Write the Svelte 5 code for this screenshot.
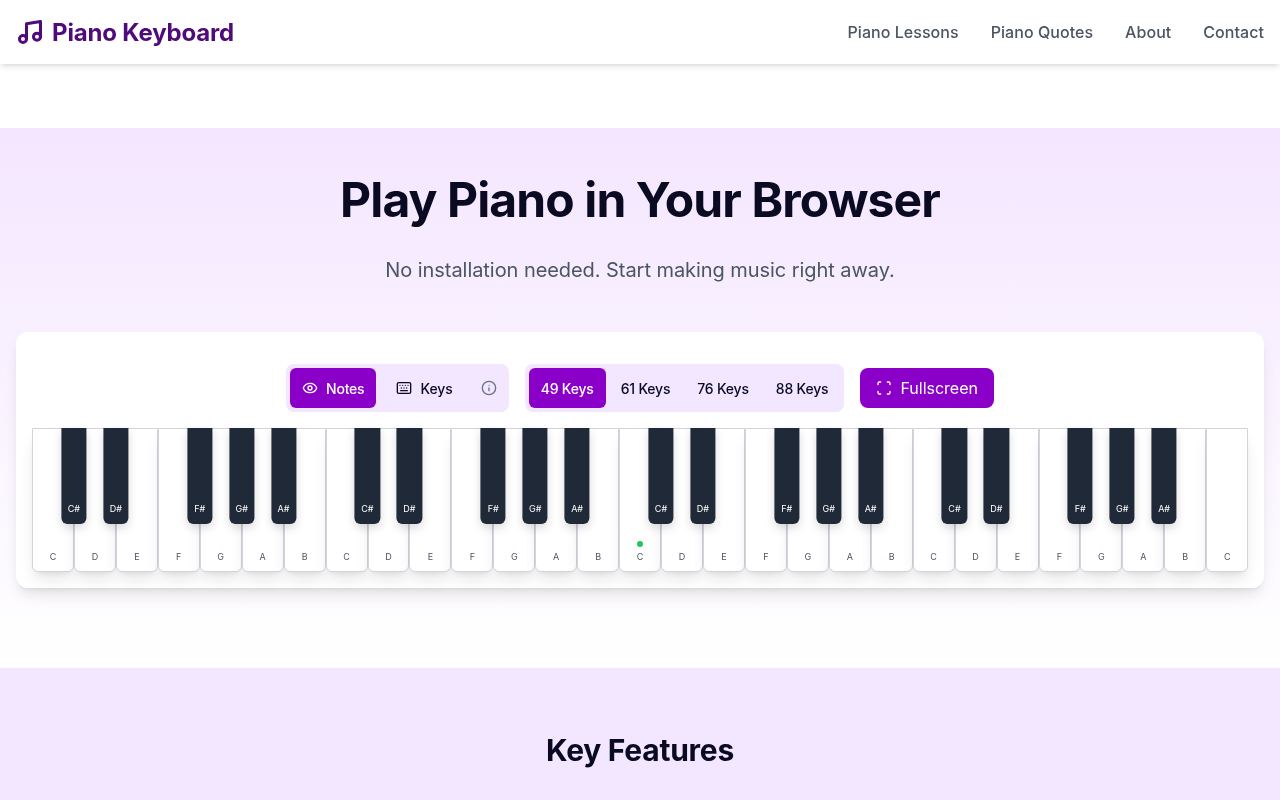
<script>
	const whiteNames = ['C', 'D', 'E', 'F', 'G', 'A', 'B'];
	const blackAfter = { C: 'C#', D: 'D#', F: 'F#', G: 'G#', A: 'A#' };
	const whiteKeys = [];
	for (let i = 0; i < 29; i++) whiteKeys.push(whiteNames[i % 7]);
	const pitch = 100 / 29;
	const blackKeys = [];
	whiteKeys.forEach((n, i) => {
		if (i < 28 && blackAfter[n]) blackKeys.push({ name: blackAfter[n], left: (i + 1) * pitch });
	});
	const sizes = ['49 Keys', '61 Keys', '76 Keys', '88 Keys'];
	const links = ['Piano Lessons', 'Piano Quotes', 'About', 'Contact'];
</script>

<div class="page">
	<header>
		<a class="logo" href="#top">
			<svg width="28" height="28" viewBox="0 0 24 24" fill="none" stroke="currentColor" stroke-width="2.6" stroke-linecap="round" stroke-linejoin="round">
				<path d="M9 18V5l12-2v13" />
				<circle cx="6" cy="18" r="3" />
				<circle cx="18" cy="16" r="3" />
			</svg>
			<span>Piano Keyboard</span>
		</a>
		<nav>
			{#each links as link}
				<a href="#top">{link}</a>
			{/each}
		</nav>
	</header>

	<main>
		<section class="hero">
			<h1>Play Piano in Your Browser</h1>
			<p class="lead">No installation needed. Start making music right away.</p>

			<div class="card">
				<div class="controls">
					<div class="group">
						<button class="active notes">
							<svg width="16" height="16" viewBox="0 0 24 24" fill="none" stroke="currentColor" stroke-width="2" stroke-linecap="round" stroke-linejoin="round">
								<path d="M2.062 12.348a1 1 0 0 1 0-.696 10.75 10.75 0 0 1 19.876 0 1 1 0 0 1 0 .696 10.75 10.75 0 0 1-19.876 0" />
								<circle cx="12" cy="12" r="3" />
							</svg>
							Notes
						</button>
						<button class="keys">
							<svg width="16" height="16" viewBox="0 0 24 24" fill="none" stroke="currentColor" stroke-width="2" stroke-linecap="round" stroke-linejoin="round">
								<rect x="2" y="4" width="20" height="16" rx="2" />
								<path d="M10 8h.01M12 12h.01M14 8h.01M16 12h.01M18 8h.01M6 8h.01M7 16h10M8 12h.01" />
							</svg>
							Keys
						</button>
						<span class="info">
							<svg width="16" height="16" viewBox="0 0 24 24" fill="none" stroke="currentColor" stroke-width="2" stroke-linecap="round" stroke-linejoin="round">
								<circle cx="12" cy="12" r="10" />
								<path d="M12 16v-4M12 8h.01" />
							</svg>
						</span>
					</div>
					<div class="group sizes">
						{#each sizes as size, i}
							<button class:active={i === 0}>{size}</button>
						{/each}
					</div>
					<button class="fullscreen">
						<svg width="16" height="16" viewBox="0 0 24 24" fill="none" stroke="currentColor" stroke-width="2" stroke-linecap="round" stroke-linejoin="round">
							<path d="M3 7V5a2 2 0 0 1 2-2h2M17 3h2a2 2 0 0 1 2 2v2M21 17v2a2 2 0 0 1-2 2h-2M7 21H5a2 2 0 0 1-2-2v-2" />
						</svg>
						Fullscreen
					</button>
				</div>

				<div class="piano">
					{#each whiteKeys as name, i}
						<div class="white">
							{#if i === 14}<i class="dot"></i>{/if}
							<span>{name}</span>
						</div>
					{/each}
					{#each blackKeys as key}
						<div class="black" style="left: {key.left}%">{key.name}</div>
					{/each}
				</div>
			</div>
		</section>

		<section class="features">
			<h2>Key Features</h2>
		</section>
	</main>
</div>

<style>
	:global(body) {
		font-family: Inter, 'Noto Sans', sans-serif;
		background: #fff;
		overflow: hidden;
	}

	.page {
		will-change: transform;
	}

	header {
		position: relative;
		z-index: 2;
		height: 64px;
		padding: 0 16px;
		display: flex;
		align-items: center;
		justify-content: space-between;
		background: #fff;
		box-shadow: 0 4px 6px -1px rgba(0, 0, 0, 0.1), 0 2px 4px -2px rgba(0, 0, 0, 0.1);
	}

	a {
		text-decoration: none;
	}

	.logo {
		display: flex;
		align-items: center;
		gap: 8px;
		color: #4f0a7c;
		font-size: 24px;
		font-weight: 700;
		letter-spacing: -0.17px;
	}

	nav {
		display: flex;
		gap: 32px;
	}

	nav a {
		color: #4b5563;
		font-size: 16px;
		font-weight: 500;
		letter-spacing: 0.05px;
	}

	main {
		padding-top: 64px;
	}

	.hero {
		height: 540px;
		box-sizing: border-box;
		padding: 44px 16px 0;
		background: linear-gradient(#f4e6ff, #fff);
		text-align: center;
	}

	h1 {
		margin: 0;
		height: 56px;
		color: #0a0a23;
		font-size: 48px;
		line-height: 56px;
		font-weight: 700;
		letter-spacing: -0.9px;
	}

	.lead {
		margin: 28px 0 0;
		height: 28px;
		color: #4b5563;
		font-size: 20px;
		line-height: 28px;
		letter-spacing: -0.06px;
	}

	.card {
		margin-top: 48px;
		padding: 32px 16px 16px;
		background: #fff;
		border-radius: 12px;
		box-shadow: 0 10px 15px -3px rgba(0, 0, 0, 0.1), 0 4px 6px -4px rgba(0, 0, 0, 0.1);
	}

	.controls {
		display: flex;
		justify-content: center;
		gap: 16px;
		margin-bottom: 16px;
	}

	.group {
		display: flex;
		align-items: center;
		gap: 8px;
		padding: 4px;
		background: #f3e6ff;
		border-radius: 8px;
	}

	.sizes {
		gap: 3px;
	}

	.sizes button {
		letter-spacing: -0.2px;
	}

	button {
		display: flex;
		align-items: center;
		gap: 8px;
		height: 40px;
		padding: 0 12px;
		border: 0;
		border-radius: 6px;
		background: transparent;
		color: #0a0a23;
		font: 500 14px Inter, 'Noto Sans', sans-serif;
	}

	button.active {
		background: #8b00c9;
		color: #fff;
	}

	button.notes {
		letter-spacing: -0.2px;
	}

	button.keys {
		letter-spacing: -0.1px;
	}

	.info {
		display: flex;
		padding: 8px;
		color: #6b7280;
	}

	.fullscreen {
		align-self: center;
		padding: 0 16px;
		background: #8b00c9;
		color: #fff;
		font-size: 16px;
		font-weight: 400;
		border-radius: 8px;
	}

	.piano {
		position: relative;
		display: flex;
		height: 144px;
	}

	.white {
		position: relative;
		flex: 1;
		box-sizing: border-box;
		display: flex;
		flex-direction: column;
		align-items: center;
		justify-content: flex-end;
		padding-bottom: 8px;
		background: #fff;
		border: 1px solid #d1d5db;
		border-radius: 0 0 6px 6px;
		box-shadow: 0 10px 15px -3px rgba(0, 0, 0, 0.1), 0 4px 6px -4px rgba(0, 0, 0, 0.1);
		color: #4b5563;
		font-size: 9px;
		line-height: 12px;
	}

	.dot {
		width: 6px;
		height: 6px;
		margin-bottom: 4px;
		border-radius: 50%;
		background: #22c55e;
	}

	.black {
		position: absolute;
		top: 0;
		width: 25.2px;
		height: 96px;
		box-sizing: border-box;
		transform: translateX(-50%);
		display: flex;
		align-items: flex-end;
		justify-content: center;
		padding-bottom: 9px;
		background: #1f2937;
		border-radius: 0 0 6px 6px;
		box-shadow: 0 4px 10px rgba(0, 0, 0, 0.15);
		color: #fff;
		font-size: 9px;
		line-height: 12px;
	}

	.features {
		height: 132px;
		padding-top: 64px;
		box-sizing: border-box;
		background: #f3e6ff;
		text-align: center;
	}

	h2 {
		margin: 0;
		color: #0a0a23;
		font-size: 30px;
		line-height: 36px;
		font-weight: 700;
		letter-spacing: -0.25px;
	}
</style>
